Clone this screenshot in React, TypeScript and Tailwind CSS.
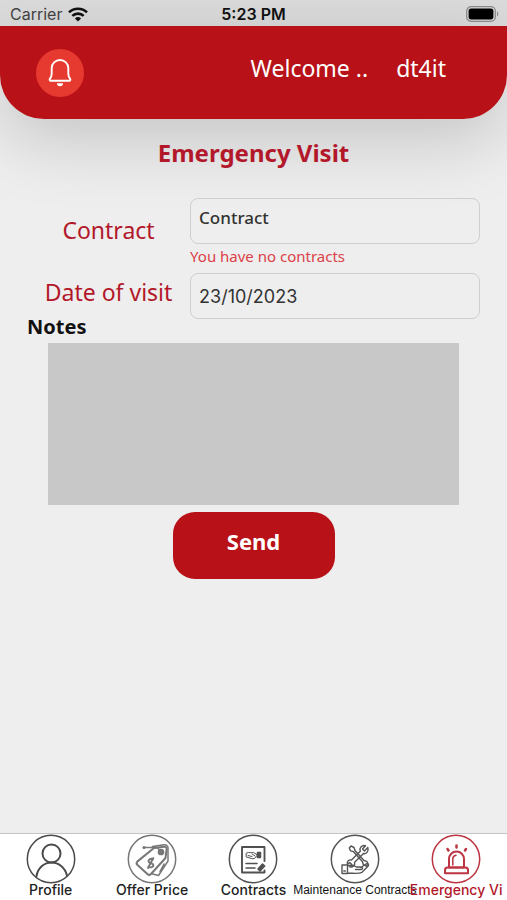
import { useState } from "react";
import type { ReactNode } from "react";

function WifiIcon() {
  return (
    <svg viewBox="0 0 20 15" className="h-[15px] w-5" fill="none" stroke="#111" strokeWidth="2.6" aria-hidden>
      <path d="M1 5.4a13 13 0 0 1 18 0" />
      <path d="M4.3 8.9a8.2 8.2 0 0 1 11.4 0" />
      <path d="M10 14.6 6.9 11.4a4.6 4.6 0 0 1 6.2 0z" fill="#111" stroke="none" />
    </svg>
  );
}

function BatteryIcon() {
  return (
    <svg viewBox="0 0 33 16" className="h-4 w-[33px]" aria-hidden>
      <rect x="0.7" y="0.7" width="28.6" height="14.6" rx="4.4" fill="none" stroke="#8c8c8c" strokeWidth="1.3" />
      <rect x="2.6" y="2.6" width="24.8" height="10.8" rx="2.6" fill="#000" />
      <path d="M31 5.6c1.7.6 1.7 4.2 0 4.8z" fill="#8c8c8c" />
    </svg>
  );
}

function BellIcon() {
  return (
    <svg viewBox="0 0 24 30" className="h-[30px] w-6" fill="none" stroke="white" strokeWidth="1.9" strokeLinejoin="round" aria-hidden>
      <path d="M3.7 15.5V10a8.3 8 0 0 1 16.600 0v5.500c0 2.500.6 3.800 1.700 5.200.7.9.3 2-.8 2H2.800c-1.100 0-1.500-1.100-.8-2 1.100-1.400 1.700-2.700 1.700-5.200z" />
      <path d="M9 25.200h6a3 3 0 0 1-6 0z" fill="white" stroke="none" />
    </svg>
  );
}

function TabIcon({ children }: { children: ReactNode }) {
  return (
    <svg
      viewBox="0 0 50 50"
      className="h-[50px] w-[50px] shrink-0"
      fill="none"
      stroke="currentColor"
      strokeWidth="1.5"
      strokeLinecap="round"
      strokeLinejoin="round"
      aria-hidden
    >
      <circle cx="25" cy="25" r="23.7" />
      {children}
    </svg>
  );
}

const tabs = [
  {
    label: "Profile",
    color: "text-[#4a4a4a]",
    text: "justify-center font-['Inter'] text-sm font-medium text-[#222]",
    icon: (
      <g strokeWidth="2">
        <circle cx="25.5" cy="19.5" r="9" />
        <path d="M10.5 42c1.500-8.500 8-13.500 15-13.500S39 33.500 41 41.500" />
      </g>
    ),
  },
  {
    label: "Offer Price",
    color: "text-[#777]",
    text: "justify-center font-['Inter'] text-sm font-medium text-[#222]",
    icon: (
      <g>
        <path d="m27 14 10-1.200c1.800-.2 2.800.9 2.600 2.600L38.500 24 24 40c-1.200 1.200-2.400 1.200-3.600 0L10.500 31c-1.200-1.200-1.200-2.400 0-3.600z" strokeWidth="2" />
        <path d="M25.500 12.500 37 10.800c2.500-.2 4 1 4 3.200v13L31.500 41.500l-6-1.500M33 37.500l4-7.500M16.500 13.500h13l5 3.500" />
        <circle cx="34" cy="18" r="2.600" fill="currentColor" />
        <circle cx="17" cy="13.500" r="0.800" fill="currentColor" />
        <path d="M26 25.500c-2-2-5.500.5-4 2.700 1 1.500 3.500.6 4.200 2.300.8 2.300-2.800 4-4.800 1.900M26.300 24l-5.300 10" strokeWidth="1.900" />
      </g>
    ),
  },
  {
    label: "Contracts",
    color: "text-[#505050]",
    text: "justify-center font-['Inter'] text-sm font-medium text-[#222]",
    icon: (
      <g>
        <path d="M36.500 27V13H14v25.500h22.500v-2" strokeWidth="1.900" />
        <path d="M18.500 19c3-1.500 5 .5 7-.5l4 2.500-3 3.500c-2 .8-4-.5-8-1.500zM20 21.500l4 1M24 20l3 2" strokeWidth="1" />
        <path d="M29.500 18.500h3v5h-3z" fill="currentColor" />
        <path d="M18 29.500h11M18 34h9" />
        <path d="m30 35 4.500-5 2.200 2-4.700 5z" fill="currentColor" />
      </g>
    ),
  },
  {
    label: "Maintenance Contracts",
    color: "text-[#555]",
    text: "justify-center font-['Liberation_Sans'] text-xs text-[#111]",
    icon: (
      <g strokeWidth="1.4">
        <path d="m21 12 3 1.500 1 3 9 10 2.800.8 1.500 3.200-2 1.700-3-1.500-.8-3-9-10-3-.9-1.200-2.800z" />
        <path d="M37.800 13.500 34.500 17l-2-2 3-3.300c-4-.8-6.500 2.500-5.200 5.500L21.500 26c-2.800-.8-5 2-4 4.500l2.300-2 2 2-2 2.400c3 .8 5.500-1.500 4.800-4.600l8.900-8.800c3 1 5.500-2.500 4.300-6z" />
        <path d="M12 31h5.500v8.500H12zM17.500 32c5-2 7 0 9 1h4.500c2 0 2 2.500 0 2.500h-5.500M31 33.500l5-3.500c2-1 3.500.8 2 2.300l-6 6c-4 2-9 .7-14.500.7" />
        <path d="M13.800 37h1.500" />
      </g>
    ),
  },
  {
    label: "Emergency Visit",
    color: "text-[#bd3442]",
    text: "w-[93px] overflow-x-clip font-['Inter'] text-sm font-medium text-[#b3182a]",
    icon: (
      <g>
        <path d="M18 33.500V25a7.500 7.500 0 0 1 15 0v8.500z" strokeWidth="2" />
        <path d="M16.500 33.500h18c1.500 0 2.500 1.200 2.500 2.700v3H14v-3c0-1.500 1-2.700 2.500-2.700z" strokeWidth="2" />
        <path d="M21.800 31v-6c0-2 1.200-3.400 3.200-3.700" />
        <path d="M25.500 11.500v2M16.500 15l1 1.500M35 15l-1 1.500" strokeWidth="2.500" />
      </g>
    ),
  },
];

export default function App() {
  const [contract, setContract] = useState("");
  const [date, setDate] = useState("23/10/2023");
  const [notes, setNotes] = useState("");

  return (
    <div className="flex min-h-screen flex-col overflow-hidden bg-[#eeeeee] font-['Noto_Sans',sans-serif]">
      <div className="grid h-[26px] grid-cols-3 items-center bg-[#dcdcdc] px-2 pt-0.5 font-['Inter',sans-serif] text-base text-[#111]">
        <div className="flex items-center gap-1.5 pl-0.5 text-[#444]">
          Carrier
          <WifiIcon />
        </div>
        <div className="text-center font-semibold">5:23 PM</div>
        <div className="flex justify-end">
          <BatteryIcon />
        </div>
      </div>

      <header className="flex h-[93px] items-center justify-between rounded-b-[44px] bg-[#b81218] pr-[61px] pl-9 text-[23px] text-white shadow-[0_20px_70px_rgba(0,0,0,0.18)]">
        <button
          type="button"
          aria-label="Notifications"
          className="flex h-12 w-12 items-center justify-center rounded-full bg-[#e63a30]"
        >
          <BellIcon />
        </button>
        <p className="flex gap-7 pb-2">
          <span>Welcome ..</span>
          <span>dt4it</span>
        </p>
      </header>

      <main className="grow px-[27px] pt-4">
        <h1 className="text-center text-2xl leading-9 font-bold text-[#b3182a]">Emergency Visit</h1>

        <form className="mt-[27px]" onSubmit={(e) => e.preventDefault()}>
          <div className="grid grid-cols-[9fr_16fr]">
            <label htmlFor="contract" className="flex h-[68px] items-center justify-center pb-1 text-[23px] text-[#b3182a]">
              Contract
            </label>
            <div>
              <select
                id="contract"
                value={contract}
                onChange={(e) => setContract(e.target.value)}
                className="block h-[46px] w-full appearance-none rounded-lg border border-[#cfcfcf] bg-transparent px-2 pb-1.5 text-[17px] font-medium text-[#333]"
              >
                <option value="">Contract</option>
              </select>
              <p className="text-[15px] leading-6 text-[#dc4048]">You have no contracts</p>
            </div>
          </div>

          <div className="mt-[5px] grid grid-cols-[9fr_16fr]">
            <label htmlFor="date" className="flex items-center justify-center pb-2 text-[23px] whitespace-nowrap text-[#b3182a]">
              Date of visit
            </label>
            <input
              id="date"
              type="text"
              value={date}
              onChange={(e) => setDate(e.target.value)}
              className="h-[46px] w-full min-w-0 rounded-lg border border-[#cfcfcf] bg-transparent px-2 font-['Inter',sans-serif] text-lg text-[#333]"
            />
          </div>

          <label htmlFor="notes" className="block text-xl leading-4 font-bold text-[#111]">
            Notes
          </label>
          <div className="mt-2 px-[21px]">
            <textarea
              id="notes"
              value={notes}
              onChange={(e) => setNotes(e.target.value)}
              className="block h-[162px] w-full resize-none bg-[#c8c8c8] p-2"
            />
          </div>

          <button
            type="submit"
            className="mx-auto mt-[7px] block h-[67px] w-[162px] rounded-[22px] bg-[#b81218] pb-2 text-[22px] font-bold text-white"
          >
            Send
          </button>
        </form>
      </main>

      <nav className="grid h-[67px] grid-cols-5 border-t border-[#c4c4c4] bg-white">
        {tabs.map((tab) => (
          <button key={tab.label} type="button" className={`flex min-w-0 flex-col items-center ${tab.color}`}>
            <TabIcon>{tab.icon}</TabIcon>
            <span className={`flex leading-3 whitespace-nowrap ${tab.text}`}>{tab.label}</span>
          </button>
        ))}
      </nav>
    </div>
  );
}
